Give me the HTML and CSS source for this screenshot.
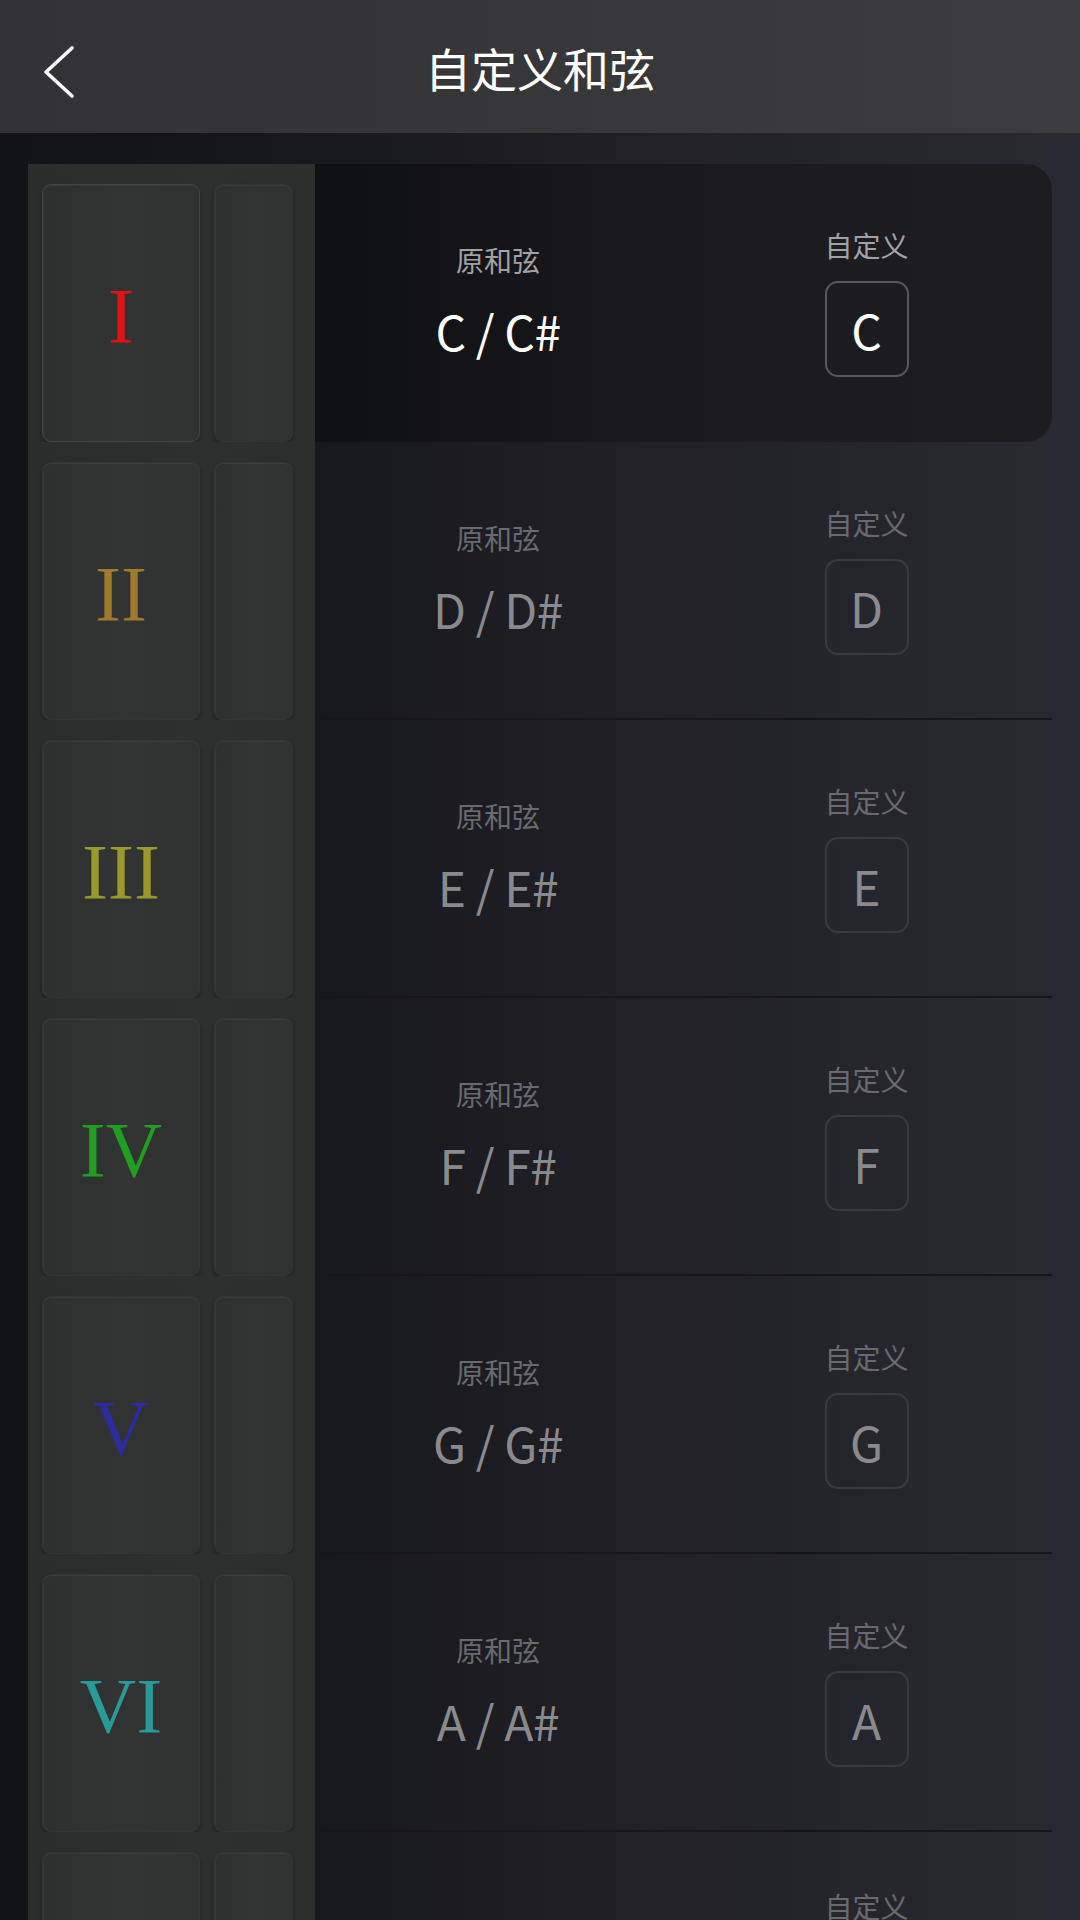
FILE: index.html
```html
<!DOCTYPE html>
<html lang="zh">
<head>
<meta charset="utf-8">
<title>自定义和弦</title>
<link rel="stylesheet" href="styles.css">
</head>
<body>
<header class="topbar">
  <svg class="back" width="40" height="60" viewBox="0 0 40 60"><polyline points="30,6 4,30 30,54" fill="none" stroke="#ffffff" stroke-width="3.6" stroke-linecap="round" stroke-linejoin="round"/></svg>
  <h1 class="title">自定义和弦</h1>
</header>
<main class="list">
  <div class="row active">
    <div class="keys"><div class="key big first"><span class="num n1">I</span></div><div class="key small"></div></div>
    <div class="info">
      <div class="orig"><div class="lbl">原和弦</div><div class="chord">C / C#</div></div>
      <div class="cust"><div class="lbl">自定义</div><div class="box">C</div></div>
    </div>
  </div>
  <div class="row">
    <div class="keys"><div class="key big"><span class="num n2">II</span></div><div class="key small"></div></div>
    <div class="info">
      <div class="orig"><div class="lbl">原和弦</div><div class="chord">D / D#</div></div>
      <div class="cust"><div class="lbl">自定义</div><div class="box">D</div></div>
    </div>
  </div>
  <div class="row">
    <div class="keys"><div class="key big"><span class="num n3">III</span></div><div class="key small"></div></div>
    <div class="info">
      <div class="orig"><div class="lbl">原和弦</div><div class="chord">E / E#</div></div>
      <div class="cust"><div class="lbl">自定义</div><div class="box">E</div></div>
    </div>
  </div>
  <div class="row">
    <div class="keys"><div class="key big"><span class="num n4">IV</span></div><div class="key small"></div></div>
    <div class="info">
      <div class="orig"><div class="lbl">原和弦</div><div class="chord">F / F#</div></div>
      <div class="cust"><div class="lbl">自定义</div><div class="box">F</div></div>
    </div>
  </div>
  <div class="row">
    <div class="keys"><div class="key big"><span class="num n5">V</span></div><div class="key small"></div></div>
    <div class="info">
      <div class="orig"><div class="lbl">原和弦</div><div class="chord">G / G#</div></div>
      <div class="cust"><div class="lbl">自定义</div><div class="box">G</div></div>
    </div>
  </div>
  <div class="row">
    <div class="keys"><div class="key big"><span class="num n6">VI</span></div><div class="key small"></div></div>
    <div class="info">
      <div class="orig"><div class="lbl">原和弦</div><div class="chord">A / A#</div></div>
      <div class="cust"><div class="lbl">自定义</div><div class="box">A</div></div>
    </div>
  </div>
  <div class="row last">
    <div class="keys"><div class="key big"></div><div class="key small"></div></div>
    <div class="info">
      <div class="orig"></div>
      <div class="cust"><div class="lbl">自定义</div></div>
    </div>
  </div>
</main>
</body>
</html>
```
FILE: styles.css
```css
html, body {
  margin: 0;
  padding: 0;
}
body {
  width: 1080px;
  height: 1920px;
  overflow: hidden;
  font-family: "Noto Sans CJK SC", "Noto Sans", sans-serif;
  background: linear-gradient(90deg, #121317 0%, #17181c 28%, #1f1f25 55%, #2a2a32 100%);
}
.topbar {
  height: 133px;
  display: flex;
  align-items: center;
  justify-content: center;
  position: relative;
  background: linear-gradient(90deg, #323234 0%, #38383a 60%, #3d3d3f 100%);
}
.back {
  position: absolute;
  left: 42px;
  top: 42px;
}
.title {
  margin: 0;
  color: #ffffff;
  font-size: 46px;
  font-weight: 400;
  line-height: 60px;
}
.list {
  padding: 31px 28px 0 28px;
  display: flex;
  flex-direction: column;
}
.row {
  display: flex;
  height: 278px;
  flex: none;
}
.keys {
  width: 287px;
  flex: none;
  box-sizing: border-box;
  padding: 20px 22px 0 14px;
  display: flex;
  gap: 14px;
  background: linear-gradient(90deg, #2b2c2c 0%, #2e2f2f 60%, #2c2d2d 100%);
}
.key {
  box-sizing: border-box;
  height: 258px;
  border-radius: 9px;
  background: linear-gradient(90deg, #2e2f2f 0%, #323333 50%, #303131 100%);
  border: 1px solid #343535;
  box-shadow: inset 0 1px 0 rgba(255,255,255,0.05), inset 1px 0 0 rgba(255,255,255,0.03), 0 3px 4px rgba(0,0,0,0.3);
  display: flex;
  align-items: center;
  justify-content: center;
}
.key.big { width: 158px; }
.key.small { width: 79px; }
.key.first { border-color: #414644; }
.num {
  font-family: "Liberation Serif", "Times New Roman", serif;
  font-size: 78px;
  line-height: 1;
  margin-top: 6px;
}
.n1 { color: #e01212; }
.n2 { color: #a27a2e; }
.n3 { color: #9a9a2c; }
.n4 { color: #1f9e22; }
.n5 { color: #2c2c9c; }
.n6 { color: #2a9a98; }
.info {
  flex: 1;
  display: grid;
  grid-template-columns: 366px 1fr;
  align-items: center;
  border-bottom: 2px solid #17171b;
  box-sizing: border-box;
}
.row.last .info { align-items: start; }
.row.last .cust { padding-top: 56px; }
.row.active .info {
  border-bottom-color: transparent;
  border-radius: 0 26px 26px 0;
  background: linear-gradient(90deg, #0f1013 0%, #16161a 30%, #1b1b20 60%, #1c1c21 100%);
}
.orig, .cust {
  display: flex;
  flex-direction: column;
  align-items: center;
}
.lbl {
  font-size: 28px;
  line-height: 36px;
  color: #6a6a6e;
}
.orig .lbl { margin-top: -4px; }
.chord {
  margin-top: 24px;
  font-size: 48px;
  line-height: 56px;
  color: #8a8a8e;
  letter-spacing: -0.5px;
}
.box {
  margin-top: 18px;
  box-sizing: border-box;
  width: 84px;
  height: 96px;
  border: 2px solid #393940;
  border-radius: 13px;
  display: flex;
  align-items: center;
  justify-content: center;
  font-size: 48px;
  color: #8a8a8e;
  line-height: 1;
}
.row.active .lbl { color: #a2a2a4; }
.row.active .chord { color: #ffffff; }
.row.active .box { color: #ffffff; border-color: #58585c; }
```
